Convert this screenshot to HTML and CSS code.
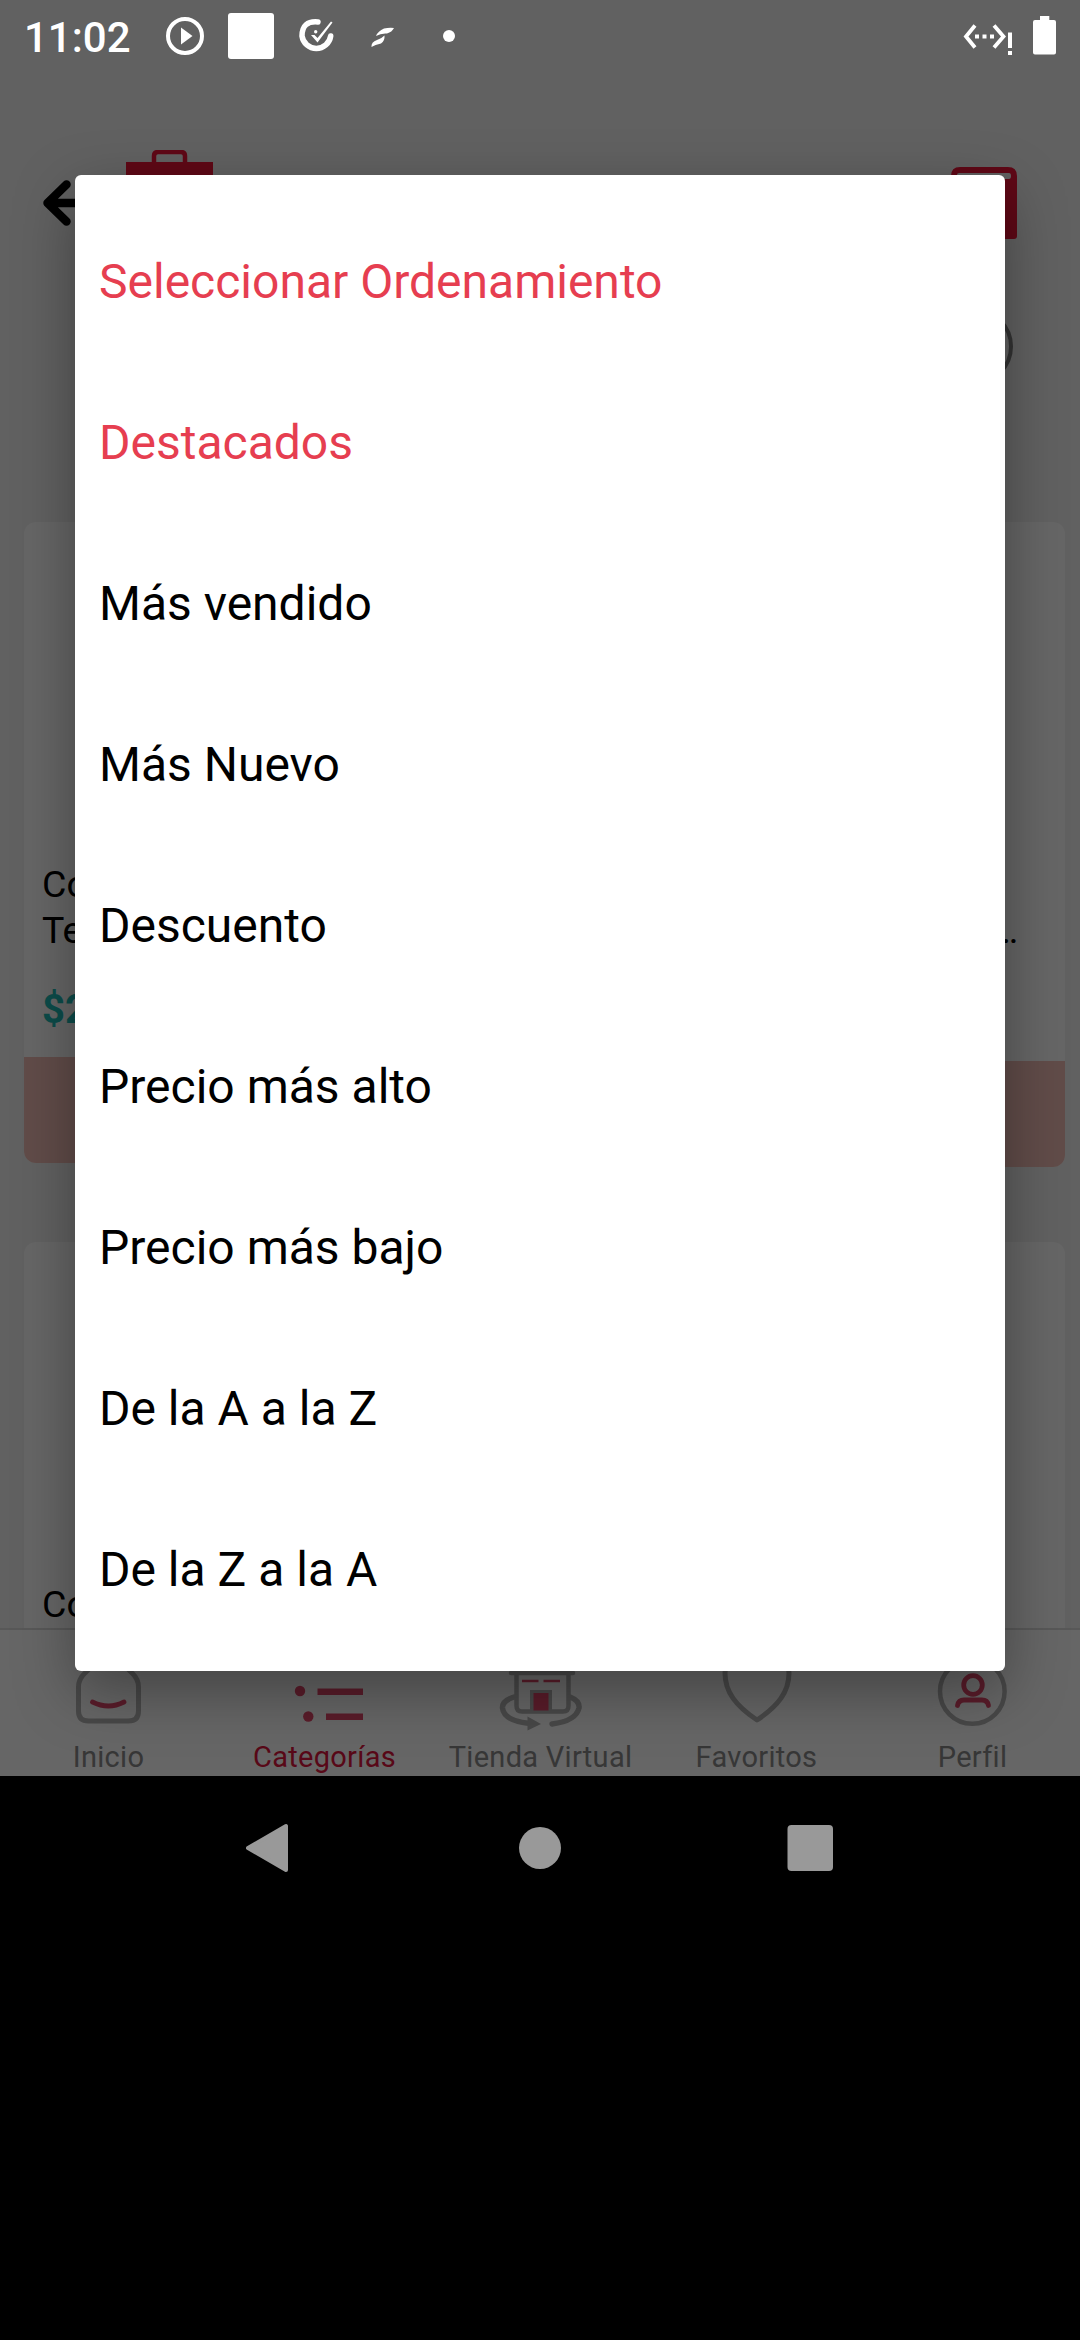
FILE: index.html
```html
<!DOCTYPE html>
<html lang="es">
<head>
<meta charset="utf-8">
<title>Seleccionar Ordenamiento</title>
<link rel="stylesheet" href="styles.css">
</head>
<body>
<div class="phone">
  <div class="app">
    <header class="topbar">
      <svg class="back" width="60" height="50" viewBox="40 178 60 50"><path d="M66.500 184.500L47.500 203L66.500 221.500M48 203H98" fill="none" stroke="#000" stroke-width="8.500" stroke-linecap="round" stroke-linejoin="round"/></svg>
      <svg class="logo" width="87" height="60" viewBox="126 150 87 60"><path d="M154 164V156Q154 152 158 152H181Q185 152 185 156V164" fill="none" stroke="#ee1439" stroke-width="4.500"/><path d="M126 162H213V210H126Z" fill="#ee1439"/></svg>
      <svg class="cart" width="66" height="72" viewBox="951 167 66 72"><path fill-rule="evenodd" d="M960 167H1008Q1017 167 1017 176V236Q1017 239 1014 239H954Q951 239 951 236V176Q951 167 960 167ZM959 173Q957 173 957 175V179H1009Q1011 179 1011 176Q1011 173 1009 173Z" fill="#ee1439"/></svg>
    </header>
    <div class="filters"><span class="round"></span></div>
    <main class="products">
      <article class="card"><p class="name">Co<br>Te</p><p class="price">$2</p><div class="buy"></div></article>
      <article class="card tall"><p class="name end">…</p><div class="buy"></div></article>
      <article class="card next"><p class="name">Co</p></article>
      <article class="card next"></article>
    </main>
    <nav class="tabs">
      <a class="tab"><svg width="80" height="90" viewBox="68 1645 80 90"><path d="M78.500 1687Q78.500 1679 85 1673L102 1656Q108.500 1650 115 1656L132 1673Q138.500 1679 138.500 1687V1711Q138.500 1721 128.500 1721H88.500Q78.500 1721 78.500 1711Z" class="g"/><path d="M92.500 1702Q108.500 1710 124 1702" class="r"/></svg><span>Inicio</span></a>
      <a class="tab active"><svg width="80" height="90" viewBox="284 1645 80 90"><g class="rf"><circle cx="300" cy="1691" r="5.200"/><circle cx="308.300" cy="1716.500" r="5.200"/><path d="M317.500 1688.500H363V1695H317.500ZM326 1713.500H363V1720H326Z"/></g></svg><span>Categorías</span></a>
      <a class="tab"><svg width="90" height="90" viewBox="495 1645 90 90"><path d="M516.500 1672V1706Q516.500 1711.500 522 1711.500H563Q568.500 1711.500 568.500 1706V1672" class="g thin"/><path d="M511 1673H573" class="g thin"/><path d="M522 1681H538.500M543.500 1681H560" class="r fine"/><path d="M530 1690H552V1712H530Z" class="gf"/><path d="M533.500 1693H548.500V1710.500H533.500Z" class="rf"/><path d="M514 1697Q502 1701 502.500 1708Q504 1721 530 1723.500M570 1697Q580 1701 579 1708Q576 1721 552 1724" class="g arc"/><path d="M527.500 1716.500L541 1724L527.500 1730.500Z" class="gf"/></svg><span>Tienda Virtual</span></a>
      <a class="tab"><svg width="80" height="90" viewBox="716 1645 80 90"><path d="M757 1720C736 1706 725 1692 725 1673C726 1651 750 1647 757 1662C764 1647 788 1651 789 1673C789 1692 778 1706 757 1720Z" class="g"/></svg><span>Favoritos</span></a>
      <a class="tab"><svg width="80" height="90" viewBox="932 1645 80 90"><circle cx="972.300" cy="1691.500" r="32.300" class="g thin"/><circle cx="973" cy="1685" r="9.300" class="r"/><path d="M957.500 1705.500Q958.500 1700 964 1700H982Q987.500 1700 988.500 1705.500" class="r"/></svg><span>Perfil</span></a>
    </nav>
  </div>
  <div class="scrim"></div>
  <div class="status">
    <span class="clock">11:02</span>
    <svg class="notes" width="330" height="72" viewBox="150 0 330 72" fill="#fff">
      <circle cx="185" cy="36" r="17" fill="none" stroke="#fff" stroke-width="4"/><path d="M181 27.500V44.500L192.500 36Z"/>
      <rect x="228" y="13" width="46" height="46" rx="3"/>
      <path d="M318 22Q302 20.500 302 36A14.500 14.500 0 0 0 330.700 36" fill="none" stroke="#fff" stroke-width="5.500" stroke-linecap="round"/>
      <path d="M311 35L314.500 35L317.500 38L331 21.500L332.500 22.500L317.500 42.500Z"/><circle cx="315.700" cy="31.700" r="1.700"/>
      <path d="M376 36Q378 31 384 28.500Q389 27.500 394 28Q392 32 387 33.500Q381 33 376 36ZM371.500 47Q371 42 377 40Q381 39 384.500 35.500Q385 41 381 43.500Q375 44.500 371.500 47Z"/>
      <circle cx="449" cy="36" r="6"/>
    </svg>
    <svg class="system" width="100" height="72" viewBox="960 0 100 72" fill="#fff">
      <path d="M975 25.500L966 36.500L975 47.500M994 25.500L1003.500 36.500L994 47.500" fill="none" stroke="#fff" stroke-width="3.800"/><path d="M975 34.500h4v4h-4zM982.500 34.500h4v4h-4zM990 34.500h4v4h-4zM1008 32.500h4v15.500h-4zM1008 51h4v4h-4z"/>
      <path d="M1040 16H1049.300V20H1054Q1056 20 1056 22V52.500Q1056 54.500 1054 54.500H1035Q1033 54.500 1033 52.500V22Q1033 20 1035 20H1040Z"/>
    </svg>
  </div>
  <ul class="dialog">
    <li class="red">Seleccionar Ordenamiento</li>
    <li class="red">Destacados</li>
    <li>Más vendido</li>
    <li>Más Nuevo</li>
    <li>Descuento</li>
    <li>Precio más alto</li>
    <li>Precio más bajo</li>
    <li>De la A a la Z</li>
    <li>De la Z a la A</li>
  </ul>
  <div class="navkeys">
    <svg width="48" height="50" viewBox="246 1823 48 50"><path d="M248 1848L286 1826V1870Z" fill="#999" stroke="#999" stroke-width="4" stroke-linejoin="round"/></svg>
    <svg width="48" height="50" viewBox="516 1823 48 50"><circle cx="540" cy="1848" r="21" fill="#999"/></svg>
    <svg width="48" height="50" viewBox="786 1823 48 50"><rect x="787.500" y="1825" width="45.500" height="46" rx="4" fill="#999"/></svg>
  </div>
</div>
</body>
</html>
```
FILE: styles.css
```css
* { box-sizing: border-box; margin: 0; padding: 0; }
body { background: #000; font-family: Roboto, sans-serif; }
.phone { position: relative; width: 1080px; height: 2340px; overflow: hidden; background: #000; }
.app { display: flex; flex-direction: column; height: 1776px; overflow: hidden; background: #f3f3f3; }
.topbar { display: flex; align-items: flex-start; flex: none; height: 258px; padding: 150px 63px 0 40px; }
.back { margin-top: 28px; }
.logo { margin-left: 26px; }
.cart { margin: 17px 0 0 auto; }
.filters { display: flex; justify-content: flex-end; flex: none; height: 142px; padding: 50px 67px 0 0; }
.round { width: 77px; height: 77px; border: 4px solid #808080; border-radius: 50%; }
.products { flex: none; height: 1228px; display: grid; grid-template-columns: 504px 504px; grid-template-rows: 645px 386px; column-gap: 33px; row-gap: 75px; padding: 122px 15px 0 24px; overflow: hidden; }
.card { display: flex; flex-direction: column; height: 641px; padding-top: 339px; background: #fff; border-radius: 12px; overflow: hidden; }
.card.tall { height: 645px; }
.name { padding-left: 18px; font-size: 37.5px; line-height: 46px; color: #000; }
.name.end { padding: 46px 47px 0 0; text-align: right; }
.price { padding: 32px 0 0 18px; font-size: 40px; line-height: 50px; font-weight: 700; color: #20bfba; }
.buy { flex: none; height: 106px; margin-top: auto; background: #f3bfb7; }
.tabs { display: grid; grid-template-columns: repeat(5, 1fr); flex: none; height: 148px; background: #fff; border-top: 2px solid #dcdcdc; }
.tab { display: flex; flex-direction: column; align-items: center; padding-top: 15px; color: #8a8a8a; font-size: 29px; line-height: 34px; white-space: nowrap; }
.tab span { margin-top: 5px; padding-left: 1px; letter-spacing: 0.3px; }
.tab.active { color: #dc143c; }
.g { fill: none; stroke: #b4b4b4; stroke-width: 5px; stroke-linecap: round; stroke-linejoin: round; }
.thin { stroke-width: 4.500px; }
.arc { stroke-width: 5.500px; }
.r { fill: none; stroke: #e0486a; stroke-width: 4.800px; stroke-linecap: round; }
.fine { stroke-width: 2.500px; stroke-linecap: butt; }
.gf { fill: #b4b4b4; }
.rf { fill: #e0486a; }
.scrim { position: absolute; inset: 0 0 auto 0; height: 1776px; background: rgba(0, 0, 0, 0.6); }
.status { position: absolute; inset: 0 0 auto 0; height: 72px; display: flex; color: #fff; }
.clock { width: 150px; padding-left: 24px; font-size: 42px; font-weight: 500; line-height: 75px; }
.system { margin: 0 20px 0 auto; }
.dialog { position: absolute; left: 75px; top: 175px; width: 930px; height: 1496px; padding: 26px 24px; list-style: none; background: #fff; border-radius: 6px; box-shadow: 0 20px 60px rgba(0, 0, 0, 0.35); }
.dialog li { height: 161px; font-size: 48px; line-height: 161px; color: #000; }
.dialog .red { color: #e63e50; }
.navkeys { display: grid; grid-template-columns: repeat(3, 270px); justify-content: center; justify-items: center; align-items: center; height: 144px; background: #000; position: relative; }
```
